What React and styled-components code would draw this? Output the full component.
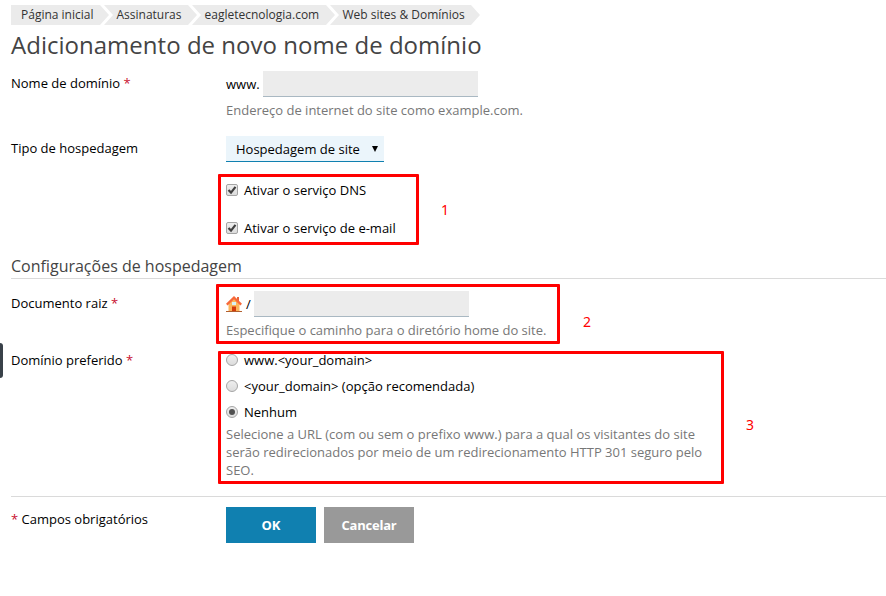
import React from "react";
import styled, { createGlobalStyle, css } from "styled-components";

const GlobalStyle = createGlobalStyle`
  * { box-sizing: border-box; }
  html, body { margin: 0; background: #fff; }
  body {
    font: 13px/18px "Open Sans", sans-serif;
    color: #000;
  }
`;

const Page = styled.main`
  position: relative;
  width: 886px;
  height: 596px;
  overflow: hidden;
  padding: 5px 0 0 11px;
`;

const Breadcrumbs = styled.nav`
  display: flex;
  height: 20px;
`;

const Crumb = styled.a`
  width: ${(p) => p.$width}px;
  height: 20px;
  padding-left: ${(p) => (p.$first ? 10 : 12.5)}px;
  margin-left: ${(p) => (p.$first ? 0 : -5)}px;
  background: #ebebeb;
  color: #333;
  font-size: 12px;
  line-height: 20px;
  white-space: nowrap;
  clip-path: ${(p) =>
    p.$first
      ? "polygon(0 0, calc(100% - 9px) 0, 100% 50%, calc(100% - 9px) 100%, 0 100%)"
      : "polygon(0 0, calc(100% - 9px) 0, 100% 50%, calc(100% - 9px) 100%, 0 100%, 9px 50%)"};
`;

const Title = styled.h1`
  margin: 3px 0 0;
  height: 35px;
  font-size: 24px;
  line-height: 33px;
  font-weight: 400;
  letter-spacing: 0.02px;
  color: #444;
  white-space: nowrap;
`;

const Form = styled.form`
  display: flex;
  flex-direction: column;
`;

const Row = styled.div`
  display: grid;
  grid-template-columns: 215px 1fr;
  height: ${(p) => p.$height}px;
`;

const Label = styled.div`
  padding-top: ${(p) => p.$top || 0}px;
`;

const Required = styled.span`
  color: #c8102e;
`;

const Control = styled.div`
  display: flex;
  flex-direction: column;
  align-items: flex-start;
  padding-top: ${(p) => p.$top || 0}px;
`;

const FieldLine = styled.div`
  display: flex;
  height: 27px;
  align-items: center;
`;

const Prefix = styled.span`
  width: 37px;
  padding-top: 1px;
`;

const Slash = styled.span`
  width: 12px;
  padding-left: 4px;
`;

const Input = styled.input`
  width: 215px;
  height: 26px;
  padding: 0 8px;
  border: 0;
  border-bottom: 1px solid #a9b8c2;
  border-radius: 0;
  background: #ececec;
  font: inherit;
  outline: 0;
`;

const Hint = styled.p`
  margin: ${(p) => p.$top}px 0 0;
  width: 490px;
  color: #777;
`;

const SelectBox = styled.button`
  display: flex;
  align-items: center;
  justify-content: space-between;
  width: 158px;
  height: 26px;
  padding: 1px 6px 0 10px;
  border: 0;
  border-bottom: 1px solid #1080b0;
  background: #ebf5fb;
  color: #000;
  font: inherit;
`;

const Option = styled.label`
  display: flex;
  align-items: center;
  gap: 6px;
  height: 18px;
  margin-bottom: ${(p) => p.$gap || 0}px;
`;

const mark = css`
  flex: none;
  width: 12px;
  height: 12px;
  border: 1px solid #a5a5a5;
  background: linear-gradient(#eee, #dcdcdc);
`;

const CheckMark = styled.span`
  ${mark}
  border-radius: 2px;
  svg { display: block; width: 10px; height: 10px; }
`;

const RadioMark = styled.span`
  ${mark}
  display: grid;
  place-items: center;
  border-radius: 50%;
  &::after {
    content: "";
    width: 6px;
    height: 6px;
    border-radius: 50%;
    background: ${(p) => (p.$on ? "#505050" : "transparent")};
  }
`;

const SectionTitle = styled.h2`
  margin: 0;
  height: 23px;
  border-bottom: 1px solid #dadada;
  color: #444;
  font-size: 16px;
  line-height: 20px;
  font-weight: 400;
`;

const Footer = styled.footer`
  display: grid;
  grid-template-columns: 215px 1fr;
  padding-top: 10px;
  border-top: 1px solid #dadada;
`;

const Actions = styled.div`
  display: flex;
  gap: 8px;
`;

const Button = styled.button`
  width: 90px;
  height: 36px;
  padding: 0;
  border: 0;
  background: ${(p) => (p.$primary ? "#1080b0" : "#999")};
  color: #fff;
  font: 700 13px/18px "Open Sans", sans-serif;
  letter-spacing: ${(p) => (p.$primary ? 0 : -0.2)}px;
`;

const Highlight = styled.div`
  position: absolute;
  left: ${(p) => p.$x}px;
  top: ${(p) => p.$y}px;
  width: ${(p) => p.$w}px;
  height: ${(p) => p.$h}px;
  border: 3px solid #f00;
  border-radius: 1px;
  pointer-events: none;
`;

const Callout = styled.span`
  position: absolute;
  left: ${(p) => p.$x}px;
  top: ${(p) => p.$y}px;
  color: #f00;
  font-family: "Noto Sans", sans-serif;
  font-size: 14px;
`;

const SideHandle = styled.div`
  position: absolute;
  left: 0;
  top: 343px;
  width: 3px;
  height: 35px;
  border-radius: 0 3px 3px 0;
  background: #394149;
`;

const Check = () => (
  <CheckMark>
    <svg viewBox="0 0 10 10" fill="none" stroke="#404040" strokeWidth="2.2">
      <path d="M1.5 5 4 7.6 8.5 1.8" />
    </svg>
  </CheckMark>
);

const Arrow = () => (
  <svg width="6" height="6" viewBox="0 0 6 6">
    <path d="M0 0H6L3 6Z" fill="#000" />
  </svg>
);

const House = () => (
  <svg width="16" height="16" viewBox="0 0 16 16">
    <path d="M2.5 7 8 2l5.5 5v8h-11Z" fill="#fdb55b" />
    <path d="M11 1h2v4h-2Z" fill="#e8623a" />
    <path d="M.8 8.6 8 1.6l7.2 7" fill="none" stroke="#f7693a" strokeWidth="2.2" />
    <path d="M6 6h4v3H6Z" fill="#d8f0f5" />
    <path d="M6 10.5h4V15H6Z" fill="#d33a0c" />
    <path d="M0 15h16v1H0Z" fill="#b2602f" />
  </svg>
);

export default function App() {
  return (
    <Page>
      <GlobalStyle />
      <Breadcrumbs>
        <Crumb $first $width={98}>Página inicial</Crumb>
        <Crumb $width={93}>Assinaturas</Crumb>
        <Crumb $width={143}>eagletecnologia.com</Crumb>
        <Crumb $width={150}>Web sites &amp; Domínios</Crumb>
      </Breadcrumbs>
      <Title>Adicionamento de novo nome de domínio</Title>
      <Form onSubmit={(e) => e.preventDefault()}>
        <Row $height={73}>
          <Label $top={11}>Nome de domínio <Required>*</Required></Label>
          <Control $top={7}>
            <FieldLine><Prefix>www.</Prefix><Input /></FieldLine>
            <Hint $top={4}>Endereço de internet do site como example.com.</Hint>
          </Control>
        </Row>
        <Row $height={45}>
          <Label $top={3}>Tipo de hospedagem</Label>
          <SelectBox type="button">Hospedagem de site<Arrow /></SelectBox>
        </Row>
        <Row $height={75}>
          <span />
          <Control>
            <Option $gap={20}><Check />Ativar o serviço DNS</Option>
            <Option><Check />Ativar o serviço de e-mail</Option>
          </Control>
        </Row>
        <SectionTitle>Configurações de hospedagem</SectionTitle>
        <Row $height={72}>
          <Label $top={15}>Documento raiz <Required>*</Required></Label>
          <Control $top={11}>
            <FieldLine>
              <House />
              <Slash>/</Slash>
              <Input />
            </FieldLine>
            <Hint $top={4}>Especifique o caminho para o diretório home do site.</Hint>
          </Control>
        </Row>
        <Row $height={145}>
          <Label>Domínio preferido <Required>*</Required></Label>
          <Control>
            <Option $gap={8}><RadioMark />www.&lt;your_domain&gt;</Option>
            <Option $gap={8}><RadioMark />&lt;your_domain&gt; (opção recomendada)</Option>
            <Option><RadioMark $on />Nenhum</Option>
            <Hint $top={4}>
              Selecione a URL (com ou sem o prefixo www.) para a qual os visitantes do site
              serão redirecionados por meio de um redirecionamento HTTP 301 seguro pelo SEO.
            </Hint>
          </Control>
        </Row>
        <Footer>
          <Label $top={3}><Required>*</Required> Campos obrigatórios</Label>
          <Actions>
            <Button $primary>OK</Button>
            <Button type="button">Cancelar</Button>
          </Actions>
        </Footer>
      </Form>
      <SideHandle />
      <Highlight $x={218} $y={174} $w={201} $h={71} />
      <Highlight $x={216} $y={284} $w={344} $h={60} />
      <Highlight $x={218} $y={351} $w={506} $h={133} />
      <Callout $x={441} $y={201}>1</Callout>
      <Callout $x={583} $y={313}>2</Callout>
      <Callout $x={746} $y={416}>3</Callout>
    </Page>
  );
}
